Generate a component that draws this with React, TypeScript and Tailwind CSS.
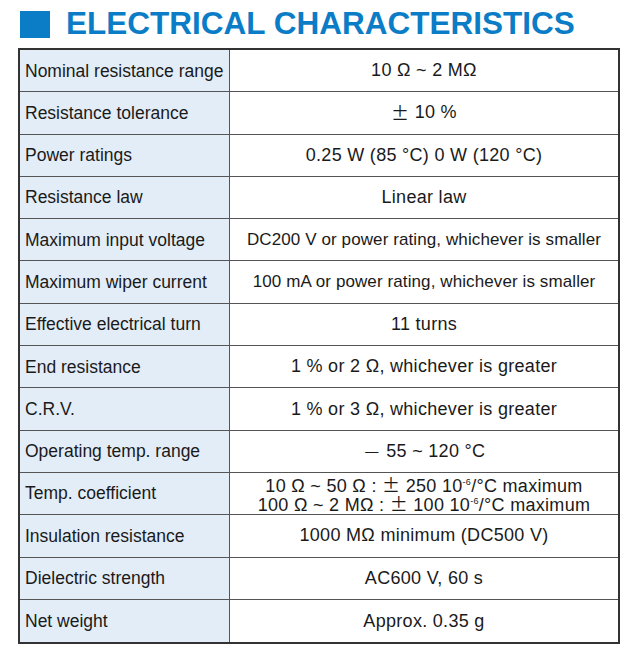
const cjk = { fontFamily: '"Noto Sans CJK JP", sans-serif' };

const Pm = () => <span style={cjk}>±</span>;

const Sup = () => <sup className="text-[9px] leading-none align-[0.7em] relative top-0">-6</sup>;

const rows: { label: string; value: React.ReactNode }[] = [
  { label: "Nominal resistance range", value: "10 Ω ~ 2 MΩ" },
  { label: "Resistance tolerance", value: <>{<Pm />} 10 %</> },
  { label: "Power ratings", value: "0.25 W (85 °C) 0 W (120 °C)" },
  { label: "Resistance law", value: "Linear law" },
  { label: "Maximum input voltage", value: <span className="text-[17px] tracking-[0.1px]">DC200 V or power rating, whichever is smaller</span> },
  { label: "Maximum wiper current", value: <span className="text-[17px] tracking-[0.1px]">100 mA or power rating, whichever is smaller</span> },
  { label: "Effective electrical turn", value: "11 turns" },
  { label: "End resistance", value: "1 % or 2 Ω, whichever is greater" },
  { label: "C.R.V.", value: "1 % or 3 Ω, whichever is greater" },
  {
    label: "Operating temp. range",
    value: (
      <>
        <span style={cjk} className="font-light">－</span>&nbsp;55 ~ 120 °C
      </>
    ),
  },
  {
    label: "Temp. coefficient",
    value: (
      <span className="flex flex-col items-center">
        <span className="leading-[19px] h-[19px]">
          10 Ω ~ 50 Ω : <Pm /> 250 10<Sup />/°C maximum
        </span>
        <span className="leading-[19px] h-[19px]">
          100 Ω ~ 2 MΩ : <Pm /> 100 10<Sup />/°C maximum
        </span>
      </span>
    ),
  },
  { label: "Insulation resistance", value: "1000 MΩ minimum (DC500 V)" },
  { label: "Dielectric strength", value: "AC600 V, 60 s" },
  { label: "Net weight", value: "Approx. 0.35 g" },
];

export default function App() {
  return (
    <div className="w-[636px] h-[663px] bg-white text-[#1a1a1a]" style={{ fontFamily: '"Liberation Sans", Arial, sans-serif' }}>
      <div className="flex items-center h-[48px] pl-[20px]">
        <span className="w-[30px] h-[27px] bg-[#0b7dc6]" />
        <h1 className="ml-[16px] text-[31.5px] font-bold text-[#0b7dc6] leading-none">ELECTRICAL CHARACTERISTICS</h1>
      </div>
      <div className="ml-[18px] w-[602px] border-2 border-[#333]">
        {rows.map((r, i) => (
          <div key={r.label} className={`flex h-[42.3px] ${i < rows.length - 1 ? "border-b border-[#555]" : ""}`}>
            <div className="w-[210px] shrink-0 flex items-center pl-[5px] bg-[#e3edf8] border-r border-[#555] text-[17.5px]">
              {r.label}
            </div>
            <div className="flex-1 flex items-center justify-center text-[18px] tracking-[0.3px] whitespace-pre">{r.value}</div>
          </div>
        ))}
      </div>
    </div>
  );
}
